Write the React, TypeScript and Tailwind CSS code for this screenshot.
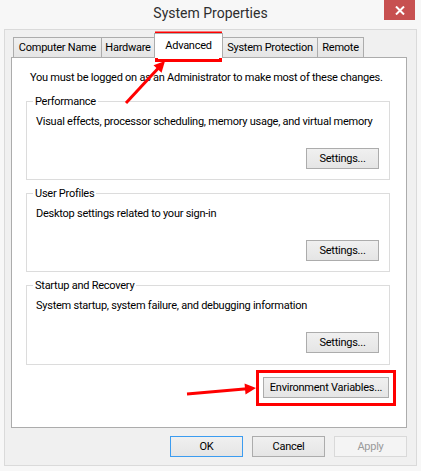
import React from "react";

const font = "font-['Roboto','Liberation_Sans',sans-serif]";

function WinButton({
  label,
  w,
  variant = "normal",
}: {
  label: string;
  w: string;
  variant?: "normal" | "default" | "disabled";
}) {
  const cls =
    variant === "default"
      ? "border-[#3c9cf0] bg-linear-to-b from-[#f0f0f0] to-[#e5e5e5] text-black"
      : variant === "disabled"
      ? "border-[#d9d9d9] bg-[#f4f4f4] text-[#9a9a9a]"
      : "border-[#acacac] bg-linear-to-b from-[#f0f0f0] to-[#e5e5e5] text-black";
  return (
    <div
      className={`${w} h-[21px] border ${cls} flex items-center justify-center text-[11px] leading-none whitespace-nowrap`}
    >
      {label}
    </div>
  );
}

function Group({
  title,
  desc,
  h,
}: {
  title: string;
  desc: string;
  h: string;
}) {
  return (
    <div className={`ml-[14px] w-[364px] ${h} border border-[#dcdcdc] flex flex-col`}>
      <div className="-mt-[8px] ml-[6px] px-[2px] bg-white w-fit leading-[15px] whitespace-nowrap">{title}</div>
      <div className="mt-[5px] pl-[9px] leading-[15px] whitespace-nowrap">{desc}</div>
      <div className="mt-[19px] flex justify-end pr-[10px]">
        <WinButton label="Settings..." w="w-[73px]" />
      </div>
    </div>
  );
}

function Tab({ label, w, selected }: { label: string; w: string; selected?: boolean }) {
  if (selected) {
    return (
      <div
        className={`${w} -ml-px h-[25px] -mb-px relative z-10 bg-white border-t border-l border-r border-[#acacac] flex items-start justify-center pt-[4px] leading-[15px] whitespace-nowrap`}
      >
        {label}
      </div>
    );
  }
  return (
    <div
      className={`${w} -ml-px first:ml-0 h-[20px] bg-linear-to-b from-[#f0f0f0] to-[#e5e5e5] border-t border-l border-r border-[#acacac] flex items-center justify-center leading-[15px] whitespace-nowrap`}
    >
      {label}
    </div>
  );
}

function Arrow({ x1, y1, x2, y2 }: { x1: number; y1: number; x2: number; y2: number }) {
  const dx = x2 - x1;
  const dy = y2 - y1;
  const len = Math.hypot(dx, dy);
  const ux = dx / len;
  const uy = dy / len;
  const hl = 11;
  const hw = 5.5;
  const bx = x2 - ux * hl;
  const by = y2 - uy * hl;
  const px = -uy;
  const py = ux;
  const pts = `${x2},${y2} ${bx + px * hw},${by + py * hw} ${bx - px * hw},${by - py * hw}`;
  return (
    <g>
      <line x1={x1} y1={y1} x2={bx + ux * 2} y2={by + uy * 2} stroke="#ff0000" strokeWidth={3} />
      <polygon points={pts} fill="#ff0000" />
    </g>
  );
}

export default function App() {
  return (
    <div className={`relative w-[421px] h-[471px] bg-[#f7f7f7] ${font} text-[11px] tracking-[-0.25px] text-black overflow-hidden`}>
      {/* Title bar */}
      <div className="h-[29px] grid grid-cols-[1fr_auto_1fr]">
        <div />
        <div className="pt-[4px] text-[14px] leading-[18px] tracking-normal text-[#2e2e2e]">System Properties</div>
        <div className="flex justify-end pr-[6px]">
          <div className="w-[31px] h-[20px] bg-[#c75050] flex items-center justify-center">
            <svg width="10" height="9" viewBox="0 0 10 9">
              <path d="M1 0.5 L9 8.5 M9 0.5 L1 8.5" stroke="#ffffff" strokeWidth="2" />
            </svg>
          </div>
        </div>
      </div>

      {/* Client area */}
      <div className="mx-[4px] h-[437px] border border-[#dadada] bg-[#f0f0f0] px-[6px] flex flex-col">
        {/* Tabs */}
        <div className="h-[27px] flex items-end pl-[2px]">
          <Tab label="Computer Name" w="w-[89px]" />
          <Tab label="Hardware" w="w-[54px]" />
          <Tab label="Advanced" w="w-[69px]" selected />
          <Tab label="System Protection" w="w-[96px]" />
          <Tab label="Remote" w="w-[47px]" />
        </div>

        {/* Tab panel */}
        <div className="w-[396px] h-[371px] border border-[#acacac] bg-white flex flex-col">
          <div className="pt-[12px] pl-[18px] leading-[15px] whitespace-nowrap">
            You must be logged on as an Administrator to make most of these changes.
          </div>
          <div className="mt-[16px] flex flex-col gap-[13px]">
            <Group
              title="Performance"
              desc="Visual effects, processor scheduling, memory usage, and virtual memory"
              h="h-[79px]"
            />
            <Group title="User Profiles" desc="Desktop settings related to your sign-in" h="h-[79px]" />
            <Group
              title="Startup and Recovery"
              desc="System startup, system failure, and debugging information"
              h="h-[80px]"
            />
          </div>
          <div className="mt-[12px] flex justify-end pr-[17px]">
            <WinButton label="Environment Variables..." w="w-[126px]" />
          </div>
        </div>

        {/* Dialog buttons */}
        <div className="mt-[8px] flex justify-end gap-[9px] pr-[1px] w-[397px]">
          <WinButton label="OK" w="w-[73px]" variant="default" />
          <WinButton label="Cancel" w="w-[73px]" />
          <WinButton label="Apply" w="w-[73px]" variant="disabled" />
        </div>
      </div>

      {/* Red annotations overlay */}
      <svg
        className="absolute left-0 top-0 pointer-events-none"
        width="421"
        height="471"
        viewBox="0 0 421 471"
      >
        <rect x="156.5" y="33" width="64" height="27.5" fill="none" stroke="#ff0000" strokeWidth="3" />
        <rect x="257.5" y="371.5" width="137" height="33" fill="none" stroke="#ff0000" strokeWidth="3" />
        <Arrow x1={126} y1={103} x2={165} y2={61} />
        <Arrow x1={187} y1={394} x2={256} y2={388} />
      </svg>
    </div>
  );
}
